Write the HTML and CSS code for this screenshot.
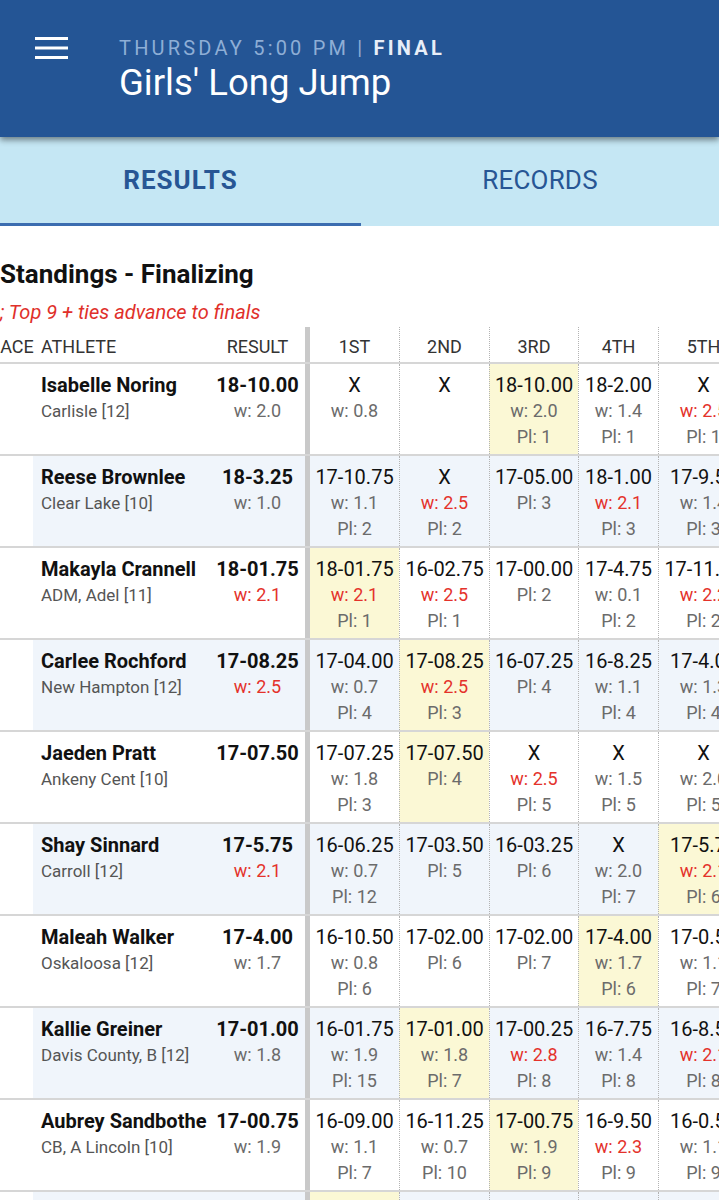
FILE: index.html
```html
<!DOCTYPE html>
<html lang="en">
<head>
<meta charset="utf-8">
<title>Girls' Long Jump</title>
<link rel="stylesheet" href="styles.css">
</head>
<body>
<header class="appbar">
  <svg class="menu" viewBox="0 0 33 22" width="33" height="22" aria-hidden="true">
    <rect x="0" y="0" width="33" height="3" fill="#fff"/>
    <rect x="0" y="9.5" width="33" height="3" fill="#fff"/>
    <rect x="0" y="19" width="33" height="3" fill="#fff"/>
  </svg>
  <div class="heading">
    <div class="meta">THURSDAY 5:00 PM | <b>FINAL</b></div>
    <div class="event">Girls' Long Jump</div>
  </div>
</header>
<nav class="tabs">
  <div class="tab active">RESULTS</div>
  <div class="tab">RECORDS</div>
</nav>
<main class="content">
  <h1 class="title">Standings - Finalizing</h1>
  <div class="note">; Top 9 + ties advance to finals</div>
  <div class="scroller">
    <div class="grid">
      <div class="row head">
        <div class="c place">PLACE</div>
        <div class="c ath">ATHLETE</div>
        <div class="c res">RESULT</div>
        <div class="c att">1ST</div>
        <div class="c att">2ND</div>
        <div class="c att">3RD</div>
        <div class="c att">4TH</div>
        <div class="c att">5TH</div>
        <div class="c att">6TH</div>
      </div>

      <div class="row data">
        <div class="c place"></div>
        <div class="c ath"><div class="nm">Isabelle Noring</div><div class="sc">Carlisle [12]</div></div>
        <div class="c res"><div class="rv">18-10.00</div><div class="w">w: 2.0</div></div>
        <div class="c att"><div class="v">X</div><div class="w">w: 0.8</div></div>
        <div class="c att"><div class="v">X</div></div>
        <div class="c att best"><div class="v">18-10.00</div><div class="w">w: 2.0</div><div class="p">Pl: 1</div></div>
        <div class="c att"><div class="v">18-2.00</div><div class="w">w: 1.4</div><div class="p">Pl: 1</div></div>
        <div class="c att"><div class="v">X</div><div class="w red">w: 2.5</div><div class="p">Pl: 1</div></div>
        <div class="c att"></div>
      </div>

      <div class="row data alt">
        <div class="c place"></div>
        <div class="c ath"><div class="nm">Reese Brownlee</div><div class="sc">Clear Lake [10]</div></div>
        <div class="c res"><div class="rv">18-3.25</div><div class="w">w: 1.0</div></div>
        <div class="c att"><div class="v">17-10.75</div><div class="w">w: 1.1</div><div class="p">Pl: 2</div></div>
        <div class="c att"><div class="v">X</div><div class="w red">w: 2.5</div><div class="p">Pl: 2</div></div>
        <div class="c att"><div class="v">17-05.00</div><div class="p">Pl: 3</div></div>
        <div class="c att"><div class="v">18-1.00</div><div class="w red">w: 2.1</div><div class="p">Pl: 3</div></div>
        <div class="c att"><div class="v">17-9.50</div><div class="w">w: 1.4</div><div class="p">Pl: 3</div></div>
        <div class="c att"></div>
      </div>

      <div class="row data">
        <div class="c place"></div>
        <div class="c ath"><div class="nm">Makayla Crannell</div><div class="sc">ADM, Adel [11]</div></div>
        <div class="c res"><div class="rv">18-01.75</div><div class="w red">w: 2.1</div></div>
        <div class="c att best"><div class="v">18-01.75</div><div class="w red">w: 2.1</div><div class="p">Pl: 1</div></div>
        <div class="c att"><div class="v">16-02.75</div><div class="w red">w: 2.5</div><div class="p">Pl: 1</div></div>
        <div class="c att"><div class="v">17-00.00</div><div class="p">Pl: 2</div></div>
        <div class="c att"><div class="v">17-4.75</div><div class="w">w: 0.1</div><div class="p">Pl: 2</div></div>
        <div class="c att"><div class="v">17-11.50</div><div class="w red">w: 2.2</div><div class="p">Pl: 2</div></div>
        <div class="c att"></div>
      </div>

      <div class="row data alt">
        <div class="c place"></div>
        <div class="c ath"><div class="nm">Carlee Rochford</div><div class="sc">New Hampton [12]</div></div>
        <div class="c res"><div class="rv">17-08.25</div><div class="w red">w: 2.5</div></div>
        <div class="c att"><div class="v">17-04.00</div><div class="w">w: 0.7</div><div class="p">Pl: 4</div></div>
        <div class="c att best"><div class="v">17-08.25</div><div class="w red">w: 2.5</div><div class="p">Pl: 3</div></div>
        <div class="c att"><div class="v">16-07.25</div><div class="p">Pl: 4</div></div>
        <div class="c att"><div class="v">16-8.25</div><div class="w">w: 1.1</div><div class="p">Pl: 4</div></div>
        <div class="c att"><div class="v">17-4.00</div><div class="w">w: 1.3</div><div class="p">Pl: 4</div></div>
        <div class="c att"></div>
      </div>

      <div class="row data">
        <div class="c place"></div>
        <div class="c ath"><div class="nm">Jaeden Pratt</div><div class="sc">Ankeny Cent [10]</div></div>
        <div class="c res"><div class="rv">17-07.50</div></div>
        <div class="c att"><div class="v">17-07.25</div><div class="w">w: 1.8</div><div class="p">Pl: 3</div></div>
        <div class="c att best"><div class="v">17-07.50</div><div class="p">Pl: 4</div></div>
        <div class="c att"><div class="v">X</div><div class="w red">w: 2.5</div><div class="p">Pl: 5</div></div>
        <div class="c att"><div class="v">X</div><div class="w">w: 1.5</div><div class="p">Pl: 5</div></div>
        <div class="c att"><div class="v">X</div><div class="w">w: 2.0</div><div class="p">Pl: 5</div></div>
        <div class="c att"></div>
      </div>

      <div class="row data alt">
        <div class="c place"></div>
        <div class="c ath"><div class="nm">Shay Sinnard</div><div class="sc">Carroll [12]</div></div>
        <div class="c res"><div class="rv">17-5.75</div><div class="w red">w: 2.1</div></div>
        <div class="c att"><div class="v">16-06.25</div><div class="w">w: 0.7</div><div class="p">Pl: 12</div></div>
        <div class="c att"><div class="v">17-03.50</div><div class="p">Pl: 5</div></div>
        <div class="c att"><div class="v">16-03.25</div><div class="p">Pl: 6</div></div>
        <div class="c att"><div class="v">X</div><div class="w">w: 2.0</div><div class="p">Pl: 7</div></div>
        <div class="c att best"><div class="v">17-5.75</div><div class="w red">w: 2.1</div><div class="p">Pl: 6</div></div>
        <div class="c att"></div>
      </div>

      <div class="row data">
        <div class="c place"></div>
        <div class="c ath"><div class="nm">Maleah Walker</div><div class="sc">Oskaloosa [12]</div></div>
        <div class="c res"><div class="rv">17-4.00</div><div class="w">w: 1.7</div></div>
        <div class="c att"><div class="v">16-10.50</div><div class="w">w: 0.8</div><div class="p">Pl: 6</div></div>
        <div class="c att"><div class="v">17-02.00</div><div class="p">Pl: 6</div></div>
        <div class="c att"><div class="v">17-02.00</div><div class="p">Pl: 7</div></div>
        <div class="c att best"><div class="v">17-4.00</div><div class="w">w: 1.7</div><div class="p">Pl: 6</div></div>
        <div class="c att"><div class="v">17-0.50</div><div class="w">w: 1.1</div><div class="p">Pl: 7</div></div>
        <div class="c att"></div>
      </div>

      <div class="row data alt">
        <div class="c place"></div>
        <div class="c ath"><div class="nm">Kallie Greiner</div><div class="sc">Davis County, B [12]</div></div>
        <div class="c res"><div class="rv">17-01.00</div><div class="w">w: 1.8</div></div>
        <div class="c att"><div class="v">16-01.75</div><div class="w">w: 1.9</div><div class="p">Pl: 15</div></div>
        <div class="c att best"><div class="v">17-01.00</div><div class="w">w: 1.8</div><div class="p">Pl: 7</div></div>
        <div class="c att"><div class="v">17-00.25</div><div class="w red">w: 2.8</div><div class="p">Pl: 8</div></div>
        <div class="c att"><div class="v">16-7.75</div><div class="w">w: 1.4</div><div class="p">Pl: 8</div></div>
        <div class="c att"><div class="v">16-8.50</div><div class="w red">w: 2.1</div><div class="p">Pl: 8</div></div>
        <div class="c att"></div>
      </div>

      <div class="row data">
        <div class="c place"></div>
        <div class="c ath"><div class="nm">Aubrey Sandbothe</div><div class="sc">CB, A Lincoln [10]</div></div>
        <div class="c res"><div class="rv">17-00.75</div><div class="w">w: 1.9</div></div>
        <div class="c att"><div class="v">16-09.00</div><div class="w">w: 1.1</div><div class="p">Pl: 7</div></div>
        <div class="c att"><div class="v">16-11.25</div><div class="w">w: 0.7</div><div class="p">Pl: 10</div></div>
        <div class="c att best"><div class="v">17-00.75</div><div class="w">w: 1.9</div><div class="p">Pl: 9</div></div>
        <div class="c att"><div class="v">16-9.50</div><div class="w red">w: 2.3</div><div class="p">Pl: 9</div></div>
        <div class="c att"><div class="v">16-0.50</div><div class="w">w: 1.1</div><div class="p">Pl: 9</div></div>
        <div class="c att"></div>
      </div>

      <div class="row data alt">
        <div class="c place"></div>
        <div class="c ath"></div>
        <div class="c res"></div>
        <div class="c att best"></div>
        <div class="c att"></div>
        <div class="c att"></div>
        <div class="c att"></div>
        <div class="c att"></div>
        <div class="c att"></div>
      </div>
    </div>
  </div>
</main>
</body>
</html>
```
FILE: styles.css
```css
html, body {
  margin: 0;
  padding: 0;
}
body {
  font-family: Roboto, "Noto Sans", "Liberation Sans", sans-serif;
  background: #fff;
  color: #111;
  width: 719px;
  overflow: hidden;
}

/* App bar */
.appbar {
  height: 137px;
  box-sizing: border-box;
  background: #245595;
  display: flex;
  align-items: flex-start;
  padding-left: 35px;
  box-shadow: 0 3px 6px rgba(0, 0, 0, 0.45);
  position: relative;
  z-index: 1;
}
.menu {
  flex: none;
  margin-top: 37px;
}
.heading {
  margin-left: 51px;
  margin-top: 36px;
}
.meta {
  font-size: 20px;
  line-height: 24px;
  letter-spacing: 3.2px;
  color: #8eaed6;
  white-space: nowrap;
}
.meta b {
  color: #e8eef8;
  font-weight: 700;
}
.event {
  font-size: 36.5px;
  line-height: 42px;
  color: #fff;
  margin-top: 2px;
  white-space: nowrap;
}

/* Tabs */
.tabs {
  display: flex;
  height: 89px;
  background: #c5e7f4;
}
.tab {
  flex: 1;
  text-align: center;
  font-size: 26px;
  line-height: 86px;
  letter-spacing: 0.2px;
  color: #275694;
  border-bottom: 3px solid transparent;
}
.tab.active {
  flex: none;
  width: 361px;
  font-weight: 700;
  letter-spacing: 1px;
  border-bottom-color: #3c6db0;
}

/* Content */
.content {
  padding: 0;
}
.title {
  margin: 32px 0 0 0;
  font-size: 26px;
  line-height: 32px;
  font-weight: 700;
  color: #111;
}
.note {
  margin-top: 9px;
  font-size: 20px;
  line-height: 26px;
  font-style: italic;
  color: #e0302a;
  white-space: nowrap;
}
.scroller {
  margin-top: 2px;
  overflow: hidden;
}
.grid {
  margin-left: -27px;
  width: max-content;
}
.row {
  display: grid;
  grid-template-columns: 60px 177px 100px 89px 90px 89px 80px 90px 90px;
  border-bottom: 2px solid #d6d6d6;
}
.row.head {
  height: 35px;
}
.row.data {
  height: 90px;
}
.row.alt {
  background: #f0f5fb;
}
.c {
  box-sizing: border-box;
  text-align: center;
  white-space: nowrap;
}
.head .c {
  padding-top: 4px;
  font-size: 18px;
  line-height: 31px;
  color: #333;
}
.data .c {
  padding-top: 8px;
}
.place {
  background: #fff;
  text-align: left;
  padding-left: 6px;
}
.ath {
  text-align: left;
  padding-left: 8px;
}
.res {
  border-right: 5px solid #c9c9c9;
}
.att + .att {
  border-left: 1px dotted #b3b3b3;
}
.best {
  background: #fbf8d5;
}

.nm {
  font-size: 20px;
  line-height: 26px;
  font-weight: 700;
  color: #111;
}
.sc {
  font-size: 17px;
  line-height: 26px;
  color: #555;
}
.rv {
  font-size: 20px;
  line-height: 26px;
  font-weight: 700;
  color: #111;
}
.v {
  font-size: 20px;
  line-height: 26px;
  color: #111;
}
.w, .p {
  font-size: 18px;
  line-height: 26px;
  color: #6b6b6b;
}
.w.red {
  color: #e4322b;
}
```
